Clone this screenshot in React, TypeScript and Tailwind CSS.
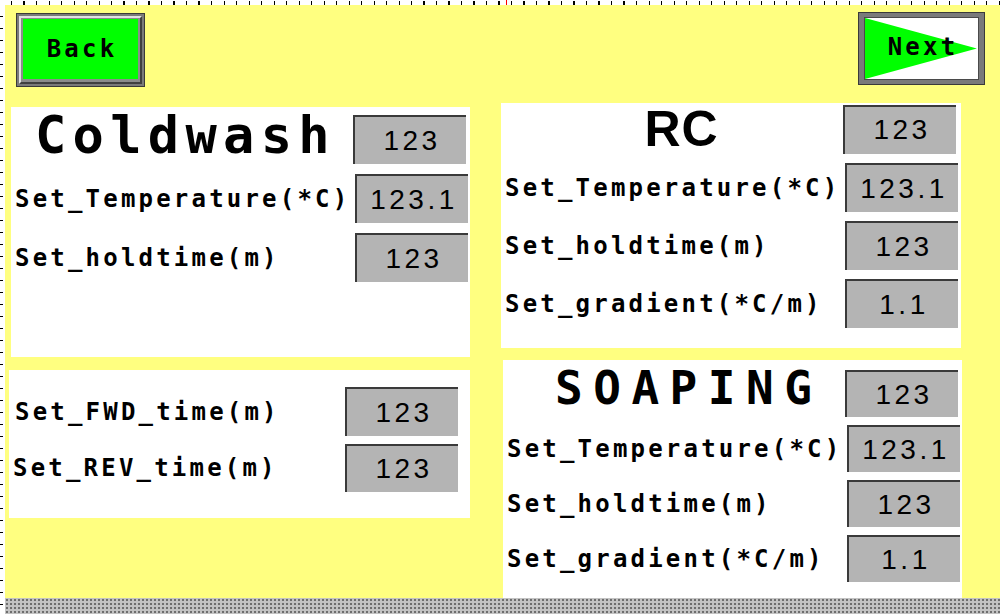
import React from 'react';

const mono = "font-['DejaVu_Sans_Mono',monospace] font-bold";
const labelCls = "font-['DejaVu_Sans_Mono',monospace] font-bold text-[24px] tracking-[3.2px] leading-none whitespace-nowrap text-black";

const ValueBox: React.FC<{ value: string; className?: string }> = ({ value, className = '' }) => (
  <div
    className={`shrink-0 flex items-center justify-center w-[113px] bg-[#b4b4b4] border-t-2 border-l-2 border-[#3a3a3a] pl-[3px] font-['Liberation_Sans',Arial,sans-serif] text-[28px] tracking-[3.5px] leading-none text-black ${className}`}
  >
    {value}
  </div>
);

const Row: React.FC<{ label: string; value: string; box?: string; labelClass?: string }> = ({ label, value, box = 'h-[48px]', labelClass = '' }) => (
  <div className="flex items-center justify-between">
    <span className={`${labelCls} ${labelClass}`}>{label}</span>
    <ValueBox value={value} className={box} />
  </div>
);

const App: React.FC = () => {
  return (
    <div className="w-[1000px] h-[614px] flex flex-col overflow-hidden bg-[#ffff80]">
      {/* top ruler */}
      <div className="relative h-[5px] shrink-0 bg-white bg-[repeating-linear-gradient(90deg,transparent_0_11px,#000_11px_12.5px)] bg-[length:100%_4px] bg-no-repeat bg-bottom">
        <div className="absolute left-[506px] top-0 w-[1px] h-[5px] bg-[#ff0000]" />
      </div>

      <div className="flex flex-1 min-h-0">
        {/* left ruler */}
        <div className="w-[5px] shrink-0 bg-white bg-[repeating-linear-gradient(180deg,transparent_0_11px,#000_11px_12px)] bg-[length:3px_100%] bg-no-repeat bg-left" />

        <div className="flex flex-col flex-1 min-w-0">
          <div className="flex-1 pt-[8px]">
            {/* header buttons */}
            <div className="flex items-start justify-between pl-[11px] pr-[15px]">
              <button className="w-[129px] h-[74px] bg-[#7a7a7a] border border-[#3a3a3a] p-[2px]">
                <div className="w-full h-full border-2 border-t-[#e2e2e2] border-l-[#e2e2e2] border-r-[#404040] border-b-[#404040] bg-[#8c8c8c] p-[2px]">
                  <div className={`w-full h-full bg-[#00ff00] flex items-center justify-center pl-[3px] -mt-[1px] ${mono} text-[24px] tracking-[3.2px] leading-none text-black`}>
                    Back
                  </div>
                </div>
              </button>
              <button className="-mt-[1px] w-[127px] h-[73px] bg-[#7a7a7a] border border-[#3a3a3a] px-[5px] py-[4px]">
                <div className="relative w-full h-full bg-white border border-[#4a4a4a] flex items-center justify-center">
                  <svg className="absolute inset-0 w-full h-full" viewBox="0 0 100 100" preserveAspectRatio="none">
                    <polygon points="0,0 99,50 0,100" fill="#00ff00" />
                  </svg>
                  <span className={`relative -mt-[4px] pl-[3px] ${mono} text-[24px] tracking-[3.2px] leading-none text-black`}>Next</span>
                </div>
              </button>
            </div>

            {/* panels */}
            <div className="flex mt-[16px] pl-[6px] gap-[31px]">
              <div className="flex flex-col w-[459px] pt-[4px] gap-[13px]">
                <div className="h-[250px] bg-white pt-[8px] pl-[4px] pr-[2px] flex flex-col gap-[10px]">
                  <div className="flex items-start justify-between">
                    <span className={`ml-[20px] -mt-[6px] ${mono} text-[52px] tracking-[6.3px] leading-none text-black`}>Coldwash</span>
                    <ValueBox value="123" className="h-[49px] mr-[2px]" />
                  </div>
                  <Row label="Set_Temperature(*C)" value="123.1" box="h-[49px]" />
                  <Row label="Set_holdtime(m)" value="123" box="h-[49px]" />
                </div>

                <div className="-ml-[2px] h-[148px] bg-white pt-[17px] pl-[6px] pr-[12px] flex flex-col gap-[8px]">
                  <Row label="Set_FWD_time(m)" value="123" box="h-[49px]" />
                  <Row label="Set_REV_time(m)" value="123" labelClass="-ml-[2px]" />
                </div>
              </div>

              <div className="flex flex-col w-[460px] gap-[12px]">
                <div className="h-[245px] bg-white pt-[1px] pl-[4px] pr-[3px] flex flex-col gap-[9px]">
                  <div className="flex items-center">
                    <span className="flex-1 text-center pl-[15px] font-['Liberation_Sans',Arial,sans-serif] font-bold text-[50px] tracking-[1px] leading-none text-black">RC</span>
                    <ValueBox value="123" className="h-[49px] mr-[2px]" />
                  </div>
                  <Row label="Set_Temperature(*C)" value="123.1" box="h-[49px]" />
                  <Row label="Set_holdtime(m)" value="123" box="h-[49px]" />
                  <Row label="Set_gradient(*C/m)" value="1.1" box="h-[49px]" />
                </div>

                <div className="ml-[2px] w-[459px] h-[238px] bg-white pt-[10px] pl-[4px] pr-[2px] flex flex-col gap-[8px]">
                  <div className="flex items-start justify-between">
                    <span className={`ml-[48px] -mt-[5px] ${mono} text-[46px] tracking-[10.5px] leading-none text-black`}>SOAPING</span>
                    <ValueBox value="123" className="h-[47px] mr-[2px]" />
                  </div>
                  <Row label="Set_Temperature(*C)" value="123.1" box="h-[47px]" />
                  <Row label="Set_holdtime(m)" value="123" box="h-[47px]" />
                  <Row label="Set_gradient(*C/m)" value="1.1" box="h-[47px]" />
                </div>
              </div>
            </div>
          </div>

          {/* bottom hatched strip */}
          <div className="h-[16px] shrink-0 bg-[#c4c4c4] bg-[radial-gradient(circle,#6e6e6e_1px,transparent_1.6px)] bg-[length:4px_4px]" />
        </div>
      </div>
    </div>
  );
};

export default App;
